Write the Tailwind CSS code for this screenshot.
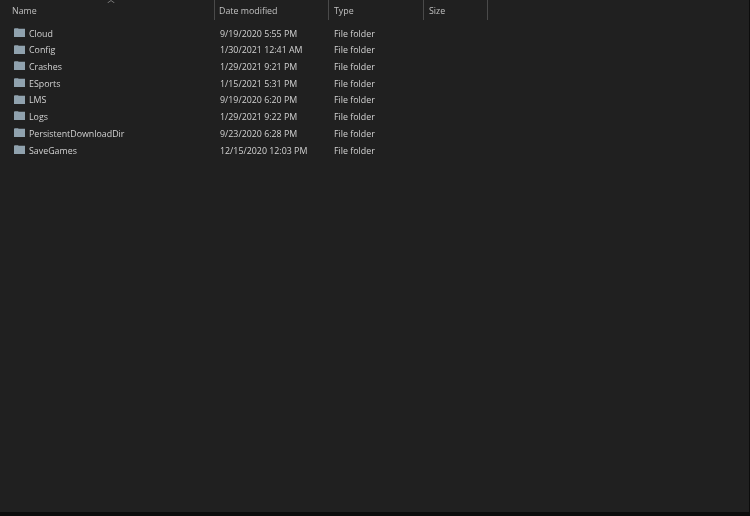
<!DOCTYPE html>
<html lang="en">
<head>
  <meta charset="UTF-8">
  <title>Saved</title>
  <script src="https://cdn.jsdelivr.net/npm/@tailwindcss/browser@4"></script>
</head>
<body class="h-[516px] w-[750px] overflow-hidden bg-[#0c0c0c] font-['Open_Sans',sans-serif] text-[8.85px] text-[#d2d2d2]">
  <div class="flex h-[512px] w-[749px] flex-col bg-[#202020]">
    <!-- column headers -->
    <div class="relative flex h-[20px] text-[#c0c0c0]">
      <svg class="absolute left-[107px] top-0" width="8" height="3" viewBox="0 0 8 3" fill="none" stroke="#777" stroke-width="1"><path d="M0.5 3 4 0.5 7.5 3"/></svg>
      <div class="w-[214px] pl-[12px] pt-[5px] blur-[0.3px]">Name</div>
      <div class="w-[114px] border-l border-[#4a4a4a] pl-[4px] pt-[5px]"><span class="blur-[0.3px]">Date modified</span></div>
      <div class="w-[95px] border-l border-[#4a4a4a] pl-[5px] pt-[5px]"><span class="blur-[0.3px]">Type</span></div>
      <div class="w-[65px] border-x border-[#4a4a4a] pl-[5px] pt-[5px]"><span class="blur-[0.3px]">Size</span></div>
    </div>
    <!-- rows -->
    <div class="mt-[6px] flex flex-col blur-[0.3px]">
      <div class="flex h-[16.7px] items-center">
        <svg class="mb-[4px] ml-[14px] mr-[4px]" width="11" height="9" viewBox="0 0 11 9"><path d="M0 1Q0 .3 1 .3h3l.7.4H11V9H0z" fill="#90a2ae"/></svg>
        <div class="w-[186px]">Cloud</div><div class="w-[114px] pl-[5px]">9/19/2020 5:55 PM</div><div class="pl-[5px]">File folder</div>
      </div>
      <div class="flex h-[16.7px] items-center">
        <svg class="mb-[4px] ml-[14px] mr-[4px]" width="11" height="9" viewBox="0 0 11 9"><path d="M0 1Q0 .3 1 .3h3l.7.4H11V9H0z" fill="#90a2ae"/></svg>
        <div class="w-[186px]">Config</div><div class="w-[114px] pl-[5px]">1/30/2021 12:41 AM</div><div class="pl-[5px]">File folder</div>
      </div>
      <div class="flex h-[16.7px] items-center">
        <svg class="mb-[4px] ml-[14px] mr-[4px]" width="11" height="9" viewBox="0 0 11 9"><path d="M0 1Q0 .3 1 .3h3l.7.4H11V9H0z" fill="#90a2ae"/></svg>
        <div class="w-[186px]">Crashes</div><div class="w-[114px] pl-[5px]">1/29/2021 9:21 PM</div><div class="pl-[5px]">File folder</div>
      </div>
      <div class="flex h-[16.7px] items-center">
        <svg class="mb-[4px] ml-[14px] mr-[4px]" width="11" height="9" viewBox="0 0 11 9"><path d="M0 1Q0 .3 1 .3h3l.7.4H11V9H0z" fill="#90a2ae"/></svg>
        <div class="w-[186px]">ESports</div><div class="w-[114px] pl-[5px]">1/15/2021 5:31 PM</div><div class="pl-[5px]">File folder</div>
      </div>
      <div class="flex h-[16.7px] items-center">
        <svg class="mb-[4px] ml-[14px] mr-[4px]" width="11" height="9" viewBox="0 0 11 9"><path d="M0 1Q0 .3 1 .3h3l.7.4H11V9H0z" fill="#90a2ae"/></svg>
        <div class="w-[186px]">LMS</div><div class="w-[114px] pl-[5px]">9/19/2020 6:20 PM</div><div class="pl-[5px]">File folder</div>
      </div>
      <div class="flex h-[16.7px] items-center">
        <svg class="mb-[4px] ml-[14px] mr-[4px]" width="11" height="9" viewBox="0 0 11 9"><path d="M0 1Q0 .3 1 .3h3l.7.4H11V9H0z" fill="#90a2ae"/></svg>
        <div class="w-[186px]">Logs</div><div class="w-[114px] pl-[5px]">1/29/2021 9:22 PM</div><div class="pl-[5px]">File folder</div>
      </div>
      <div class="flex h-[16.7px] items-center">
        <svg class="mb-[4px] ml-[14px] mr-[4px]" width="11" height="9" viewBox="0 0 11 9"><path d="M0 1Q0 .3 1 .3h3l.7.4H11V9H0z" fill="#90a2ae"/></svg>
        <div class="w-[186px]">PersistentDownloadDir</div><div class="w-[114px] pl-[5px]">9/23/2020 6:28 PM</div><div class="pl-[5px]">File folder</div>
      </div>
      <div class="flex h-[16.7px] items-center">
        <svg class="mb-[4px] ml-[14px] mr-[4px]" width="11" height="9" viewBox="0 0 11 9"><path d="M0 1Q0 .3 1 .3h3l.7.4H11V9H0z" fill="#90a2ae"/></svg>
        <div class="w-[186px]">SaveGames</div><div class="w-[114px] pl-[5px]">12/15/2020 12:03 PM</div><div class="pl-[5px]">File folder</div>
      </div>
    </div>
  </div>
</body>
</html>
